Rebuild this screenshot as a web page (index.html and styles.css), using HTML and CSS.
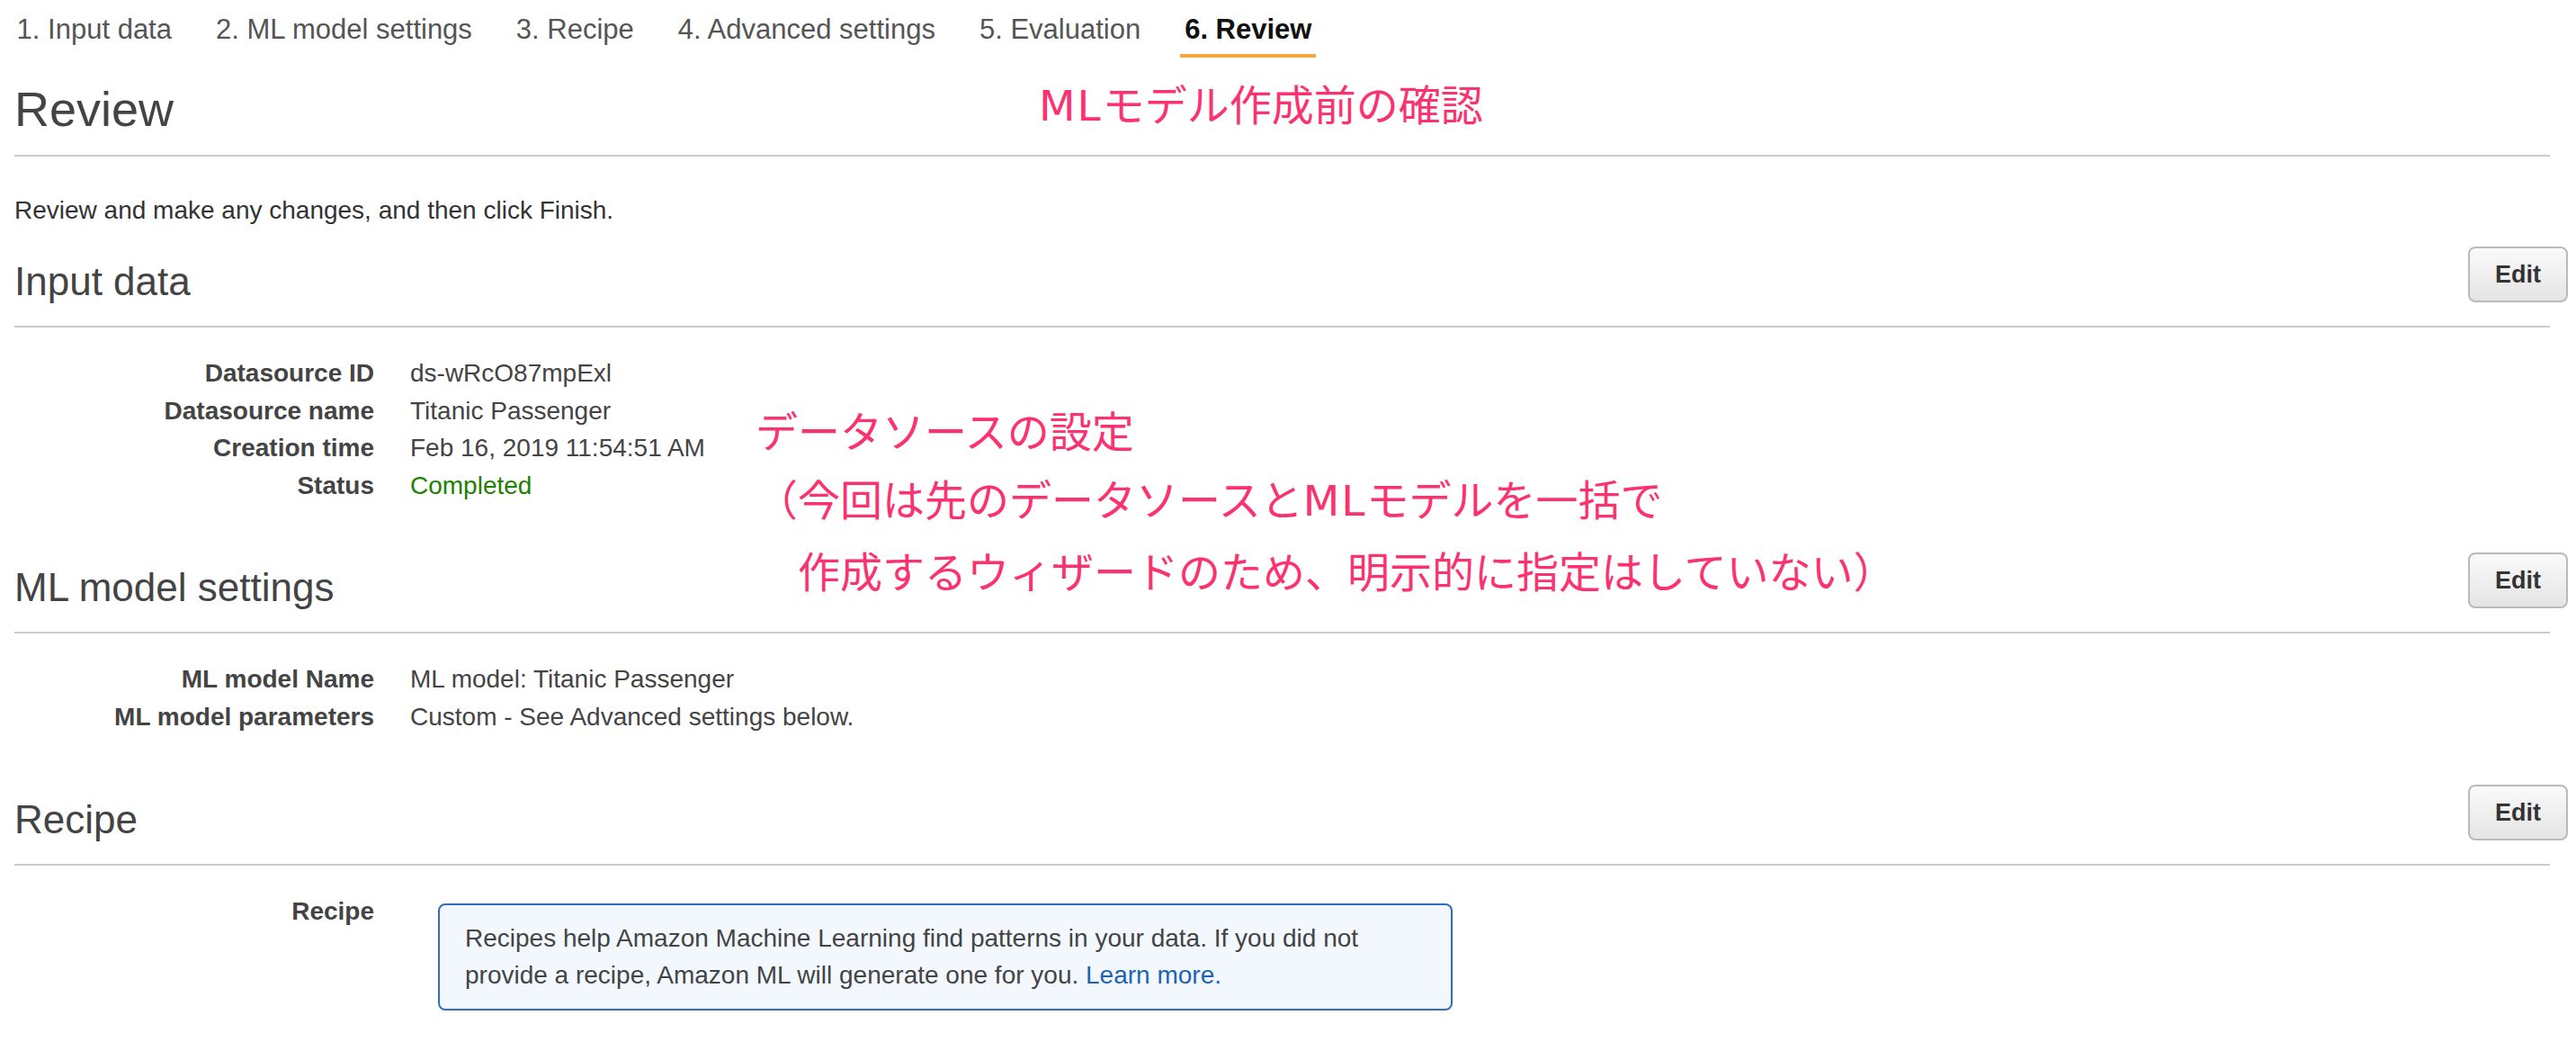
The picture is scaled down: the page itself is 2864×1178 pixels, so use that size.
FILE: index.html
```html
<!DOCTYPE html>
<html lang="ja">
<head>
<meta charset="utf-8">
<title>Review</title>
<link rel="stylesheet" href="styles.css">
</head>
<body>
<div class="page">
  <nav class="tabs">
    <span class="tab">1. Input data</span>
    <span class="tab">2. ML model settings</span>
    <span class="tab">3. Recipe</span>
    <span class="tab">4. Advanced settings</span>
    <span class="tab">5. Evaluation</span>
    <span class="tab active">6. Review</span>
  </nav>

  <h1 class="title">Review</h1>
  <p class="intro">Review and make any changes, and then click Finish.</p>

  <section class="section first">
    <div class="section-head">
      <h2 class="section-title">Input data</h2>
      <button class="edit" type="button">Edit</button>
    </div>
    <dl class="props">
      <dt>Datasource ID</dt><dd>ds-wRcO87mpExl</dd>
      <dt>Datasource name</dt><dd>Titanic Passenger</dd>
      <dt>Creation time</dt><dd>Feb 16, 2019 11:54:51 AM</dd>
      <dt>Status</dt><dd class="ok">Completed</dd>
    </dl>
  </section>

  <section class="section">
    <div class="section-head">
      <h2 class="section-title">ML model settings</h2>
      <button class="edit" type="button">Edit</button>
    </div>
    <dl class="props">
      <dt>ML model Name</dt><dd>ML model: Titanic Passenger</dd>
      <dt>ML model parameters</dt><dd>Custom - See Advanced settings below.</dd>
    </dl>
  </section>

  <section class="section">
    <div class="section-head">
      <h2 class="section-title">Recipe</h2>
      <button class="edit" type="button">Edit</button>
    </div>
    <dl class="props">
      <dt>Recipe</dt>
      <dd>
        <div class="info">Recipes help Amazon Machine Learning find patterns in your data. If you did not provide a recipe, Amazon ML will generate one for you. <a class="link" href="#">Learn more.</a></div>
      </dd>
    </dl>
  </section>

  <div class="note note-title"><span class="latin">ML</span>モデル作成前の確認</div>
  <div class="note note-ds">データソースの設定<br>（今回は先のデータソースと<span class="latin">ML</span>モデルを一括で<br>　作成するウィザードのため、明示的に指定はしていない）</div>
</div>
</body>
</html>
```

FILE: styles.css
```css
html, body {
  margin: 0;
  padding: 0;
  background: #ffffff;
}

.page {
  position: relative;
  padding: 0 9px 0 16px;
  font-family: "Liberation Sans", Arial, Helvetica, sans-serif;
  color: #444444;
  min-height: 1178px;
  box-sizing: border-box;
}

/* wizard tabs */
.tabs {
  display: flex;
  gap: 39px;
  margin-left: -2.4px;
  height: 64px;
}

.tab {
  font-size: 31px;
  line-height: 40px;
  padding: 13px 5px 7px;
  border-bottom: 4px solid transparent;
  color: #555555;
  white-space: nowrap;
}

.tab.active {
  color: #111111;
  font-weight: bold;
  border-bottom-color: #f4a83b;
}

/* page title */
.title {
  margin: 25px 20px 0 0;
  padding-bottom: 19px;
  border-bottom: 2px solid #cccccc;
  font-size: 54px;
  line-height: 64px;
  font-weight: normal;
  color: #444444;
}

.intro {
  margin: 40px 0 0;
  font-size: 28px;
  line-height: 40px;
  color: #333333;
}

/* sections */
.section {
  margin-top: 54px;
}

.section.first {
  margin-top: 20px;
}

.section-head {
  display: flex;
  justify-content: space-between;
  align-items: flex-start;
  margin-right: 20px;
  padding-bottom: 23px;
  border-bottom: 2px solid #cccccc;
}

.section-title {
  margin: 13px 0 0;
  font-size: 44px;
  line-height: 52px;
  font-weight: normal;
  color: #444444;
}

.edit {
  margin: 0 -20px 0 0;
  height: 62px;
  padding: 0 28px;
  box-sizing: border-box;
  border: 2px solid #bababa;
  border-radius: 8px;
  background: linear-gradient(#fafafa, #e4e4e4);
  font-family: "Liberation Sans", Arial, Helvetica, sans-serif;
  font-size: 27px;
  font-weight: bold;
  line-height: 58px;
  color: #333333;
}

/* property lists */
.props {
  display: grid;
  grid-template-columns: 400px 1fr;
  column-gap: 40px;
  margin: 30px 0 0;
  font-size: 28px;
  line-height: 41.6px;
}

.props dt {
  text-align: right;
  font-weight: bold;
  color: #444444;
}

.props dd {
  margin: 0;
  color: #444444;
}

.props dd.ok {
  color: #1d8102;
}

.info {
  box-sizing: border-box;
  width: 1128px;
  margin: 12.5px 0 0 31px;
  padding: 15.5px 28px 16px;
  border: 2px solid #2f6ebf;
  border-radius: 8px;
  background: #f2f8fe;
  color: #444444;
}

.link {
  color: #1c63b7;
  text-decoration: none;
}

/* pink annotations over the screenshot */
.note {
  position: absolute;
  font-family: "Noto Sans CJK JP", "Noto Sans", sans-serif;
  font-size: 47px;
  line-height: 76px;
  color: #fa3370;
  white-space: nowrap;
}

.note .latin {
  font-family: "DejaVu Sans", "Noto Sans CJK JP", sans-serif;
  font-weight: normal;
  letter-spacing: 2px;
}

.note-title {
  left: 1155px;
  top: 76px;
}

.note-ds {
  left: 840px;
  top: 439px;
}
```
